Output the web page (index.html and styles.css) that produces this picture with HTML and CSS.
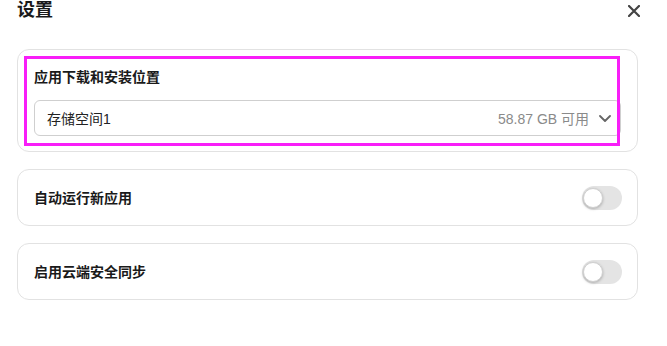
FILE: index.html
```html
<!DOCTYPE html>
<html lang="zh-CN">
<head>
<meta charset="utf-8">
<link rel="stylesheet" href="styles.css">
</head>
<body>
<div class="page">
  <header class="header">
    <h1 class="title">设置</h1>
    <button class="close" aria-label="关闭">
      <svg width="12" height="12" viewBox="0 0 12 12"><path d="M1 1L11 11M11 1L1 11" stroke="#444" stroke-width="2.2" stroke-linecap="round"/></svg>
    </button>
  </header>
  <section class="card card-stack">
    <div class="label">应用下载和安装位置</div>
    <div class="select">
      <span class="select-value">存储空间1</span>
      <span class="select-meta">58.87 GB 可用</span>
      <svg class="chevron" width="12" height="7" viewBox="0 0 12 7"><path d="M1 1L6 6L11 1" fill="none" stroke="#666" stroke-width="1.8" stroke-linecap="round" stroke-linejoin="round"/></svg>
    </div>
    <div class="highlight"></div>
  </section>
  <section class="card card-row">
    <div class="label">自动运行新应用</div>
    <div class="toggle"><span class="knob"></span></div>
  </section>
  <section class="card card-row">
    <div class="label">启用云端安全同步</div>
    <div class="toggle"><span class="knob"></span></div>
  </section>
</div>
</body>
</html>
```
FILE: styles.css
```css
* { box-sizing: border-box; }
html, body { margin: 0; padding: 0; background: #fff; }
body {
  font-family: "Liberation Sans", "Noto Sans CJK SC", sans-serif;
  color: #1a1a1a;
}
.page {
  width: 621px;
  margin-left: 17px;
  display: flex;
  flex-direction: column;
  gap: 17px;
}
.header {
  height: 32px;
  display: flex;
  justify-content: space-between;
  align-items: flex-start;
}
.title {
  margin: 0;
  font-size: 18px;
  line-height: 22px;
  font-weight: 700;
  margin-top: -1px;
}
.close {
  border: 0;
  background: none;
  padding: 0;
  margin-top: 5px;
  margin-right: -2px;
  width: 12px;
  height: 12px;
  display: flex;
}
.card {
  position: relative;
  border: 1px solid #e2e2e2;
  border-radius: 12px;
  background: #fff;
}
.card-stack {
  padding: 17px 16px 15px 16px;
  display: flex;
  flex-direction: column;
  gap: 13px;
}
.label {
  font-size: 14px;
  font-weight: 700;
  line-height: 20px;
  color: #1a1a1a;
}
.select {
  height: 36px;
  border: 1px solid #cfcfcf;
  border-radius: 6px;
  display: flex;
  align-items: center;
  padding: 0 9px 0 12px;
  font-size: 14px;
}
.select-value { flex: 1; color: #222; }
.select-meta { color: #8a8a8a; margin-right: 10px; }
.chevron { display: block; }
.highlight {
  position: absolute;
  left: 6px;
  top: 6px;
  width: 596px;
  height: 90px;
  border: 3px solid #f81ef8;
}
.card-row {
  height: 57px;
  padding: 0 15px 0 16px;
  display: flex;
  align-items: center;
  justify-content: space-between;
}
.toggle {
  width: 40px;
  height: 24px;
  border-radius: 12px;
  background: #e4e4e4;
  position: relative;
}
.knob {
  position: absolute;
  left: 1px;
  top: 2px;
  width: 20px;
  height: 20px;
  border-radius: 50%;
  background: #fff;
  border: 1px solid #d0d0d0;
  box-shadow: 0 1px 3px rgba(0,0,0,0.25);
}
```
